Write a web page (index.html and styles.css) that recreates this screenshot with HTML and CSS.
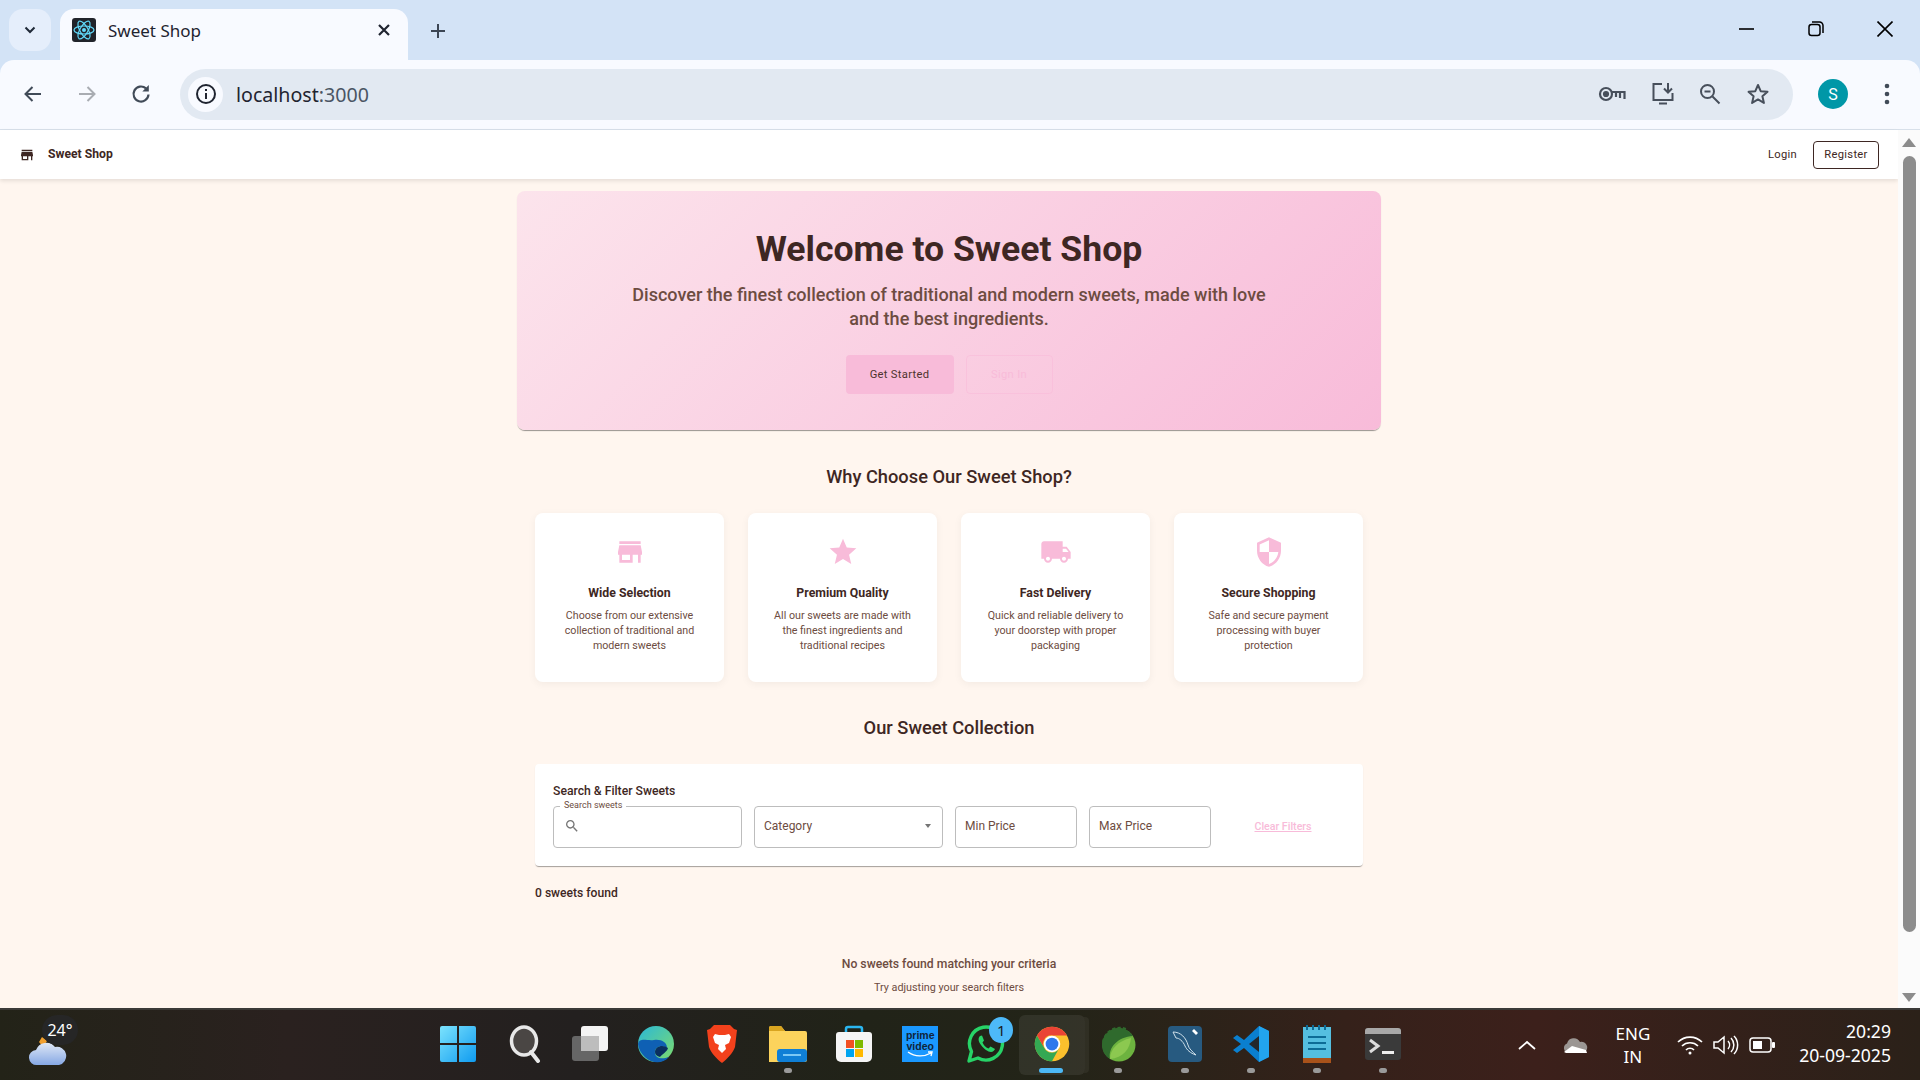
FILE: index.html
```html
<!DOCTYPE html>
<html lang="en">
<head>
    <meta charset="UTF-8">
    <title>Sweet Shop</title>
    <link rel="stylesheet" href="styles.css">
</head>
<body>
    <div class="tabstrip">
        <button class="tab-list"><svg width="14" height="14" viewBox="0 0 14 14"><path d="M2.5 4.5 7 9l4.5-4.5" fill="none" stroke="#1f2937" stroke-width="2"/></svg></button>
        <div class="tab">
            <svg class="favicon" width="24" height="24" viewBox="0 0 24 24">
                <rect width="24" height="24" rx="3" fill="#20232a"/>
                <g fill="none" stroke="#61dafb" stroke-width="1.2">
                    <ellipse cx="12" cy="12" rx="10" ry="4"/>
                    <ellipse cx="12" cy="12" rx="10" ry="4" transform="rotate(60 12 12)"/>
                    <ellipse cx="12" cy="12" rx="10" ry="4" transform="rotate(120 12 12)"/>
                </g>
                <circle cx="12" cy="12" r="2" fill="#61dafb"/>
            </svg>
            <span class="tab-title">Sweet Shop</span>
            <svg width="14" height="14" viewBox="0 0 14 14"><path d="M2 2l10 10M12 2 2 12" stroke="#1f2430" stroke-width="2.2"/></svg>
        </div>
        <svg class="new-tab" width="16" height="16" viewBox="0 0 16 16"><path d="M8 1v14M1 8h14" stroke="#3c4654" stroke-width="2"/></svg>
        <div class="window-controls">
            <svg width="16" height="16" viewBox="0 0 16 16"><path d="M0 8h15" stroke="#000" stroke-width="1.6"/></svg>
            <svg width="16" height="16" viewBox="0 0 16 16" fill="none" stroke="#000" stroke-width="1.5"><rect x="1" y="3.5" width="11" height="11" rx="2.5"/><path d="M4 1h7.5A3.5 3.5 0 0 1 15 4.500V12"/></svg>
            <svg width="16" height="16" viewBox="0 0 16 16"><path d="M.5.5l15 15M15.500.5l-15 15" stroke="#000" stroke-width="1.6"/></svg>
        </div>
    </div>

    <div class="toolbar">
        <svg class="tool" width="24" height="24" viewBox="0 0 24 24"><path d="M20 12H5M11.500 5 4.500 12l7 7" fill="none" stroke="#414b58" stroke-width="2"/></svg>
        <svg class="tool" width="24" height="24" viewBox="0 0 24 24"><path d="M4 12h15M12.500 5l7 7-7 7" fill="none" stroke="#a9acb2" stroke-width="2"/></svg>
        <svg class="tool" width="24" height="24" viewBox="0 0 24 24"><path d="M19.500 12.500A7.500 7.500 0 1 1 17 6.400" fill="none" stroke="#414b58" stroke-width="2.200"/><path d="M19.800 3v6.500h-6.500z" fill="#414b58"/></svg>
        <div class="omnibox">
            <span class="site-info"><svg width="22" height="22" viewBox="0 0 22 22"><circle cx="11" cy="11" r="9" fill="none" stroke="#1f2430" stroke-width="2"/><path d="M11 10v6M11 6v2" stroke="#1f2430" stroke-width="2"/></svg></span>
            <span class="url">localhost<span class="url-port">:3000</span></span>
            <div class="omni-icons">
                <svg width="28" height="16" viewBox="0 0 28 16" fill="none" stroke="#474f5b" stroke-width="2.200"><circle cx="8" cy="8" r="6"/><circle cx="8" cy="8" r="2" fill="#474f5b"/><path d="M14 6h12.500v7M22 7v5M18 7v4"/></svg>
                <svg width="24" height="24" viewBox="0 0 24 24" fill="none" stroke="#474f5b" stroke-width="2"><path d="M11 2H2.500v16h19v-7M8 21.500h8M17 1v9M13 6.500l4 4 4-4"/></svg>
                <svg width="22" height="22" viewBox="0 0 22 22" fill="none" stroke="#474f5b" stroke-width="2"><circle cx="8.500" cy="8.500" r="6.500"/><path d="M13.500 13.500l7 7M5.500 8.500h6"/></svg>
                <svg width="24" height="24" viewBox="0 0 24 24"><path d="M12 3l2.700 6.200 6.800.6-5.100 4.500 1.500 6.600L12 17.400l-5.900 3.500 1.500-6.600-5.100-4.500 6.800-.6z" fill="none" stroke="#474f5b" stroke-width="2" stroke-linejoin="round"/></svg>
            </div>
        </div>
        <span class="avatar">S</span>
        <svg class="kebab" width="6" height="22" viewBox="0 0 6 22" fill="#414b58"><circle cx="3" cy="3" r="2.300"/><circle cx="3" cy="11" r="2.300"/><circle cx="3" cy="19" r="2.300"/></svg>
    </div>

    <div class="viewport">
        <div class="page">
            <nav class="navbar">
                <svg width="16" height="16" viewBox="0 0 24 24" fill="#3e2723"><path d="M20 4H4v2h16V4zm1 10v-2l-1-5H4l-1 5v2h1v6h10v-6h4v6h2v-6h1zm-9 4H6v-4h6v4z"/></svg>
                <span class="brand">Sweet Shop</span>
                <a class="nav-login">Login</a>
                <a class="nav-register">Register</a>
            </nav>

            <main class="content">
                <section class="hero">
                    <h1>Welcome to Sweet Shop</h1>
                    <p>Discover the finest collection of traditional and modern sweets, made with love and the best ingredients.</p>
                    <div class="hero-actions">
                        <a class="btn-primary">Get Started</a>
                        <a class="btn-ghost">Sign In</a>
                    </div>
                </section>

                <h2 class="why-title">Why Choose Our Sweet Shop?</h2>
                <div class="features">
                    <div class="feature">
                        <svg viewBox="0 0 24 24"><path d="M20 4H4v2h16V4zm1 10v-2l-1-5H4l-1 5v2h1v6h10v-6h4v6h2v-6h1zm-9 4H6v-4h6v4z"/></svg>
                        <h3>Wide Selection</h3>
                        <p>Choose from our extensive collection of traditional and modern sweets</p>
                    </div>
                    <div class="feature">
                        <svg viewBox="0 0 24 24"><path d="M12 17.270 18.180 21l-1.640-7.030L22 9.240l-7.190-.61L12 2 9.190 8.630 2 9.240l5.460 4.730L5.820 21z"/></svg>
                        <h3>Premium Quality</h3>
                        <p>All our sweets are made with the finest ingredients and traditional recipes</p>
                    </div>
                    <div class="feature">
                        <svg viewBox="0 0 24 24"><path d="M20 8h-3V4H3c-1.100 0-2 .9-2 2v11h2c0 1.660 1.340 3 3 3s3-1.340 3-3h6c0 1.660 1.340 3 3 3s3-1.340 3-3h2v-5l-3-4zM6 18.500c-.83 0-1.500-.67-1.500-1.500s.67-1.500 1.500-1.500 1.500.67 1.500 1.500-.67 1.500-1.500 1.500zm13.500-9 1.960 2.500H17V9.500h2.500zm-1.500 9c-.83 0-1.500-.67-1.500-1.500s.67-1.500 1.500-1.500 1.500.67 1.500 1.500-.67 1.500-1.500 1.500z"/></svg>
                        <h3>Fast Delivery</h3>
                        <p>Quick and reliable delivery to your doorstep with proper packaging</p>
                    </div>
                    <div class="feature">
                        <svg viewBox="0 0 24 24"><path d="M12 1 3 5v6c0 5.550 3.840 10.740 9 12 5.160-1.260 9-6.450 9-12V5l-9-4zm0 10.990h7c-.53 4.120-3.280 7.790-7 8.940V12H5V6.300l7-3.110v8.800z"/></svg>
                        <h3>Secure Shopping</h3>
                        <p>Safe and secure payment processing with buyer protection</p>
                    </div>
                </div>

                <h2 class="collection-title">Our Sweet Collection</h2>
                <div class="filters">
                    <h4>Search &amp; Filter Sweets</h4>
                    <div class="filter-row">
                        <div class="field field-wide field-search">
                            <span class="field-label">Search sweets</span>
                            <svg width="16" height="16" viewBox="0 0 24 24" fill="#757575"><path d="M15.500 14h-.79l-.28-.27C15.410 12.590 16 11.110 16 9.500 16 5.910 13.090 3 9.500 3S3 5.910 3 9.500 5.910 16 9.500 16c1.610 0 3.090-.59 4.230-1.570l.27.28v.79l5 4.990L20.490 19l-4.990-5zm-6 0C7.010 14 5 11.990 5 9.500S7.010 5 9.500 5 14 7.010 14 9.500 11.990 14 9.500 14z"/></svg>
                        </div>
                        <div class="field field-wide field-select">Category<span class="caret"></span></div>
                        <div class="field field-price">Min Price</div>
                        <div class="field field-price">Max Price</div>
                        <a class="clear-filters">Clear Filters</a>
                    </div>
                </div>
                <p class="result-count">0 sweets found</p>
                <p class="empty-title">No sweets found matching your criteria</p>
                <p class="empty-hint">Try adjusting your search filters</p>
            </main>
        </div>
        <div class="scrollbar">
            <span class="arrow-up"></span>
            <span class="thumb"></span>
            <span class="arrow-down"></span>
        </div>
    </div>

    <footer class="taskbar">
        <div class="weather">
            <svg width="38" height="36" viewBox="0 0 38 36">
                <path d="M10 12l3-5 5 4-4 6z" fill="#f0a030"/>
                <defs><linearGradient id="cloud" x1="0" y1="0" x2="0" y2="1"><stop offset="0" stop-color="#dfe8f6"/><stop offset="1" stop-color="#86a8e4"/></linearGradient></defs>
                <path d="M8 35a7.500 7.500 0 0 1-1-15 11 11 0 0 1 19-3 9 9 0 0 1 4 18z" fill="url(#cloud)"/>
            </svg>
            <span class="temp">24°</span>
        </div>
        <div class="apps">
            <span class="app">
                <svg width="36" height="36" viewBox="0 0 36 36"><defs><linearGradient id="win" x1="0" y1="0" x2="1" y2="1"><stop offset="0" stop-color="#7ce3fd"/><stop offset="1" stop-color="#0f9bf0"/></linearGradient></defs><path d="M2 0h15v17H0V2a2 2 0 0 1 2-2zM19 0h15a2 2 0 0 1 2 2v15H19zM0 19h17v17H2a2 2 0 0 1-2-2zM19 19h17v15a2 2 0 0 1-2 2H19z" fill="url(#win)"/></svg>
            </span>
            <span class="app">
                <svg width="34" height="38" viewBox="-2 0 34 38"><ellipse cx="15" cy="16" rx="12.500" ry="14" fill="#4a4644" stroke="#e8e8e8" stroke-width="3.500"/><path d="M22 27l7 9" stroke="#e8e8e8" stroke-width="4" stroke-linecap="round"/></svg>
            </span>
            <span class="app">
                <svg width="36" height="36" viewBox="0 0 36 36"><rect x="0" y="10" width="27" height="25" rx="3" fill="#666"/><rect x="9" y="0" width="27" height="25" rx="3" fill="#f4f4f4"/><path d="M9 10h18v15H9z" fill="#bdbdbd"/></svg>
            </span>
            <span class="app">
                <svg width="36" height="38" viewBox="0 0 36 38"><defs><linearGradient id="edge" x1="0" y1="0" x2="1" y2="1"><stop offset="0" stop-color="#2ab8d8"/><stop offset="1" stop-color="#7fdc6a"/></linearGradient></defs><circle cx="18" cy="19" r="18" fill="url(#edge)"/><path d="M0 19C2 34 20 44 31 32c-8 3-15 1-14-6 .7-5 8-6 12-3 0-6-6-9-13-8C8 16 2 12 0 19z" fill="#0f60b4"/><path d="M17 27c0-6 8-8 13-4-1 4-6 6-8 9-3-1-5-2-5-5z" fill="#0a2f5f"/></svg>
            </span>
            <span class="app">
                <svg width="30" height="38" viewBox="0 0 30 38"><path d="M7 0h16l4 4 3 1-2 17c-2 6-8 12-13 16C10 34 4 28 2 22L0 5l3-1z" fill="#f3411c"/><path d="M8 9l4 1h6l4-1 2 3-2 6-4 2 1 4-4 4-4-4 1-4-4-2-2-6z" fill="#fff"/></svg>
            </span>
            <span class="app has-dot">
                <svg width="38" height="36" viewBox="0 0 38 36"><path d="M0 2a2 2 0 0 1 2-2h10l4 5h20a2 2 0 0 1 2 2v27a2 2 0 0 1-2 2H0z" fill="#fcd35c"/><path d="M0 2a2 2 0 0 1 2-2h10l4 5H0z" fill="#d9a520"/><rect x="8" y="23" width="30" height="13" rx="3" fill="#0f7fd6"/><path d="M14 29h18" stroke="#7cc8f5" stroke-width="2"/></svg>
            </span>
            <span class="app">
                <svg width="36" height="38" viewBox="0 0 36 38"><path d="M10 8V4a2 2 0 0 1 2-2h12a2 2 0 0 1 2 2v4" fill="none" stroke="#2ab6f0" stroke-width="2.500"/><path d="M3 7h30a3 3 0 0 1 3 3v22a5 5 0 0 1-5 5H5a5 5 0 0 1-5-5V10a3 3 0 0 1 3-3z" fill="#f5f5f5"/><rect x="10" y="15" width="8" height="8" fill="#f25022"/><rect x="19" y="15" width="8" height="8" fill="#7fba00"/><rect x="10" y="24" width="8" height="8" fill="#00a4ef"/><rect x="19" y="24" width="8" height="8" fill="#ffb900"/></svg>
            </span>
            <span class="app"><span class="prime"><span>prime</span><span>video</span><svg width="26" height="7" viewBox="0 0 26 7"><path d="M1 1c7 5 16 5 23 1M21 1l4 0-1 4" fill="none" stroke="#fff" stroke-width="1.400"/></svg></span></span>
            <span class="app">
                <span class="whatsapp">
                    <svg width="38" height="38" viewBox="0 0 38 38"><path d="M2 36l2.500-9.500A16.500 16.500 0 1 1 11 33z" fill="none" stroke="#27d367" stroke-width="3.400" stroke-linejoin="round"/><path d="M13 11c-2 2-2 5 1 9s7 7 10 7c2 0 3.500-1.500 4-3l-4.500-2.500-2 2c-3-1-5-3.500-6-6l1.500-2L15 10.500z" fill="#27d367"/></svg>
                    <span class="badge">1</span>
                </span>
            </span>
            <span class="app app-active">
                <svg width="36" height="36" viewBox="0 0 48 48"><circle cx="24" cy="24" r="23" fill="#fbc02d"/><path d="M4.100 12.500 14 29.500A11 11 0 0 0 33.500 29.500L24 47A23 23 0 0 1 4.100 12.500z" fill="#34a853"/><path d="M4.100 12.500A23 23 0 0 1 43.900 12.500H24A11 11 0 0 0 14 29.500z" fill="#ea4335"/><circle cx="24" cy="24" r="11" fill="#fff"/><circle cx="24" cy="24" r="8.500" fill="#2f78ec"/></svg>
            </span>
            <span class="app has-dot">
                <svg width="36" height="38" viewBox="0 0 36 38"><circle cx="19" cy="20" r="16.500" fill="#6db33f"/><path d="M4 17a16 16 0 0 1 22-12" fill="none" stroke="#2f6a2d" stroke-width="4" stroke-dasharray="3 2"/><path d="M19 3a17 17 0 0 0-17 17c0 6 3 11 8 14C8 22 18 12 33 11c-3-5-8-8-14-8z" fill="#2f6a2d"/><path d="M10 34c0-10 8-18 21-21-1 11-8 20-21 21z" fill="#8cc850"/></svg>
            </span>
            <span class="app has-dot">
                <svg width="34" height="36" viewBox="0 0 34 36"><rect width="34" height="36" rx="4" fill="#275a80"/><path d="M5 6c8 0 13 6 15 13 1 4 4 6 8 10-6-2-9-5-11-9C15 15 11 12 8 12z" fill="none" stroke="#cfe0ea" stroke-width="1"/><path d="M26 3l4 4-2 2-4-4z" fill="#fff"/></svg>
            </span>
            <span class="app has-dot">
                <svg width="36" height="36" viewBox="0 0 36 36"><path d="M26 0l10 5v26l-10 5-15-14-7 5-4-3 8-6-8-6 4-3 7 5z" fill="#0a7fcf"/><path d="M26 0l10 5v26l-10 5z" fill="#22a4ee"/><path d="M26 10v16l-10-8z" fill="#23272b"/></svg>
            </span>
            <span class="app has-dot">
                <svg width="30" height="38" viewBox="0 0 30 38"><rect x="1" y="2" width="28" height="31" fill="#55bfe0"/><rect x="1" y="33" width="28" height="5" fill="#a9521a"/><path d="M6 12h18M6 18h18M6 24h18" stroke="#0d6c96" stroke-width="2"/><path d="M5 0v5M11 0v5M17 0v5M23 0v5" stroke="#0d6c96" stroke-width="2"/></svg>
            </span>
            <span class="app has-dot">
                <svg width="36" height="32" viewBox="0 0 36 32"><rect width="36" height="32" rx="3" fill="#3a3a3a"/><path d="M0 3a3 3 0 0 1 3-3h30a3 3 0 0 1 3 3v3H0z" fill="#a8a8a8"/><path d="M5 12l8 6-8 6" fill="none" stroke="#ddd" stroke-width="3"/><rect x="17" y="23" width="12" height="3" fill="#eee"/></svg>
            </span>
        </div>
        <div class="tray">
            <svg class="tray-chevron" width="18" height="10" viewBox="0 0 18 10"><path d="M1 9l8-7 8 7" fill="none" stroke="#fff" stroke-width="1.800"/></svg>
            <svg class="tray-cloud" width="26" height="16" viewBox="0 0 26 16"><path d="M6 16a5 5 0 0 1-1-9.500A7 7 0 0 1 18 5a5.500 5.500 0 0 1 3 11z" fill="#9b9693"/><path d="M2 15l8-6 14 4 1 3H4z" fill="#fff"/></svg>
            <span class="lang">ENG<br>IN</span>
            <svg width="26" height="20" viewBox="0 0 26 20" fill="none" stroke="#fff" stroke-width="1.700"><path d="M1 7a17 17 0 0 1 24 0M5 11a11.500 11.500 0 0 1 16 0M9 15a5.500 5.500 0 0 1 8 0"/><circle cx="13" cy="18" r="1.500" fill="#fff" stroke="none"/></svg>
            <svg width="26" height="20" viewBox="0 0 26 20" fill="none" stroke="#fff" stroke-width="1.500"><path d="M1 7v6h4l6 5V2L5 7zM15 6a6 6 0 0 1 0 8M18 3a10 10 0 0 1 0 14M21 1a13 13 0 0 1 0 18"/></svg>
            <svg width="26" height="16" viewBox="0 0 26 16"><rect x="1" y="1" width="21" height="14" rx="3" fill="none" stroke="#fff" stroke-width="1.500"/><rect x="4" y="4" width="9" height="8" fill="#fff"/><rect x="23" y="5" width="3" height="6" rx="1" fill="#fff"/></svg>
            <span class="clock">20:29<br>20-09-2025</span>
        </div>
    </footer>
</body>
</html>
```

FILE: styles.css
```css
* { margin: 0; padding: 0; box-sizing: border-box; }
body { width: 1920px; height: 1080px; overflow: hidden; display: flex; flex-direction: column; font-family: Roboto, sans-serif; background-color: #d3e3f6; }

/* browser chrome */
.tabstrip { height: 60px; flex: none; display: flex; align-items: flex-end; padding-left: 9px; }
.tab-list { width: 42px; height: 42px; margin-bottom: 9px; border: none; border-radius: 14px; background-color: #e5eefb; display: flex; align-items: center; justify-content: center; }
.tab { width: 348px; height: 51px; margin-left: 9px; padding: 0 17px 9px 12px; background-color: #f8faff; border-radius: 14px 14px 0 0; display: flex; align-items: center; }
.tab-title { flex: 1; margin-left: 12px; font-family: "Noto Sans", sans-serif; font-size: 17px; color: #1f2430; }
.new-tab { margin: 0 0 21px 22px; }
.window-controls { margin-left: auto; height: 100%; display: flex; align-items: center; gap: 53px; padding: 0 27px 2px 0; }

.toolbar { height: 70px; flex: none; display: flex; align-items: center; padding: 0 0 1px 21px; background-color: #f8faff; border-radius: 14px 14px 0 0; border-bottom: 1px solid #d8e0ea; }
.tool { margin-right: 30px; }
.omnibox { width: 1613px; height: 51px; margin-left: -3px; padding: 0 23px 0 8px; border-radius: 26px; background-color: #e2e9f2; display: flex; align-items: center; }
.site-info { width: 35px; height: 35px; border-radius: 50%; background-color: #f8faff; display: flex; align-items: center; justify-content: center; }
.url { margin-left: 13px; font-family: "Noto Sans", sans-serif; font-size: 19.6px; color: #1f2430; }
.url-port { color: #4a5564; }
.omni-icons { margin-left: auto; width: 172px; display: flex; align-items: center; justify-content: space-between; }
.avatar { width: 30px; height: 30px; margin-left: 25px; border-radius: 50%; background-color: #0097a7; color: #fff; font-size: 16px; display: flex; align-items: center; justify-content: center; }
.kebab { margin-left: 36px; }

/* page */
.viewport { height: 878px; flex: none; display: flex; background-color: #fff6ef; }
.page { width: 1898px; display: flex; flex-direction: column; }
.navbar { height: 49px; flex: none; padding: 0 19px 0 19px; background-color: #fff; display: flex; align-items: center; box-shadow: 0 2px 4px rgba(0, 0, 0, 0.1); color: #3e2723; }
.brand { margin: 0 0 2px 13px; font-size: 12.2px; font-weight: 700; }
.nav-login { margin-left: auto; font-size: 11.2px; letter-spacing: 0.3px; }
.nav-register { margin-left: 16px; width: 66px; height: 28px; border: 1px solid #3e2723; border-radius: 4px; font-size: 11.2px; letter-spacing: 0.3px; display: flex; align-items: center; justify-content: center; }

.content { display: flex; flex-direction: column; align-items: center; padding-top: 12px; color: #3e2723; }
.hero { width: 864px; height: 239px; padding-top: 35px; text-align: center; border-radius: 8px; background: linear-gradient(135deg, #fce4ec, #f8bbd9); box-shadow: 0 2px 1px -1px rgba(0, 0, 0, 0.3), 0 1px 1px rgba(0, 0, 0, 0.14); }
.hero h1 { font-size: 35.6px; line-height: 46px; font-weight: 700; }
.hero p { width: 640px; margin: 11px auto 0; font-size: 18.05px; line-height: 24px; font-weight: 500; color: #6d4c41; }
.hero-actions { margin-top: 24px; display: flex; justify-content: center; gap: 12px; }
.btn-primary, .btn-ghost { height: 39px; display: flex; align-items: center; justify-content: center; font-size: 11.2px; letter-spacing: 0.3px; border-radius: 4px; }
.btn-primary { width: 108px; background-color: #f8bbd9; color: #4e342e; }
.btn-ghost { width: 87px; color: #f8bbd9; border: 1px solid rgba(248, 187, 217, 0.6); }

.why-title, .collection-title { font-size: 18.3px; line-height: 24px; font-weight: 500; }
.why-title { margin-top: 35px; }
.features { margin-top: 24px; width: 828px; display: flex; gap: 24px; }
.feature { flex: 1; height: 169px; padding-top: 23px; text-align: center; background-color: #fff; border-radius: 8px; box-shadow: 0 2px 8px rgba(0, 0, 0, 0.05); }
.feature svg { width: 32px; height: 32px; fill: #f8bbd9; display: block; margin: 0 auto; }
.feature h3 { margin-top: 16px; font-size: 12.3px; line-height: 18px; font-weight: 700; }
.feature p { width: 146px; margin: 6px auto 0; font-size: 10.7px; line-height: 15px; color: #6d4c41; }
.collection-title { margin-top: 34px; }

.filters { margin-top: 24px; width: 828px; height: 102px; padding: 19px 18px 0; background-color: #fff; border-radius: 4px; box-shadow: 0 2px 1px -1px rgba(0, 0, 0, 0.25), 0 1px 1px rgba(0, 0, 0, 0.14); }
.filters h4 { font-size: 12.2px; line-height: 16px; font-weight: 500; }
.filter-row { margin-top: 7px; display: flex; gap: 12px; align-items: center; }
.field { position: relative; flex: none; height: 42px; padding: 0 9px 2px; border: 1px solid #bdbdbd; border-radius: 4px; display: flex; align-items: center; font-size: 12px; color: #6d4c41; }
.field-wide { width: 189px; }
.field-price { width: 122px; }
.field-search svg { margin-left: 1px; }
.field-label { position: absolute; top: -7px; left: 6px; padding: 0 4px; background-color: #fff; font-size: 9px; line-height: 11px; color: #6d4c41; }
.caret { margin: 0 2px 0 auto; border: 3.5px solid transparent; border-top: 4px solid #757575; border-bottom: none; }
.clear-filters { flex: none; width: 120px; padding-bottom: 1px; text-align: center; font-size: 10.6px; font-weight: 500; color: #f8bbd9; text-decoration: underline; }
.result-count { align-self: flex-start; margin: 19px 0 0 535px; font-size: 12.1px; line-height: 16px; font-weight: 500; }
.empty-title { margin-top: 54px; font-size: 12.2px; line-height: 18px; font-weight: 500; color: #6d4c41; }
.empty-hint { margin-top: 7px; font-size: 10.8px; line-height: 16px; color: #6d4c41; }

.scrollbar { width: 22px; padding: 8px 4px 2px 4px; background-color: #fbfbfb; display: flex; flex-direction: column; align-items: center; }
.arrow-up { border: 7px solid transparent; border-bottom: 9px solid #8c8c8c; border-top: none; }
.thumb { width: 13px; height: 776px; margin-top: 9px; border-radius: 7px; background-color: #8c8c8c; }
.arrow-down { margin-top: auto; margin-bottom: 4px; border: 7px solid transparent; border-top: 9px solid #8c8c8c; border-bottom: none; }

/* taskbar */
.taskbar { height: 72px; flex: none; display: flex; align-items: center; border-top: 2px solid #3b3a38; color: #fff; font-family: "Noto Sans", sans-serif; background: linear-gradient(90deg, #232318 0%, #2a211f 15%, #23201f 30%, #212318 45%, #232418 55%, #35211a 70%, #3c201b 80%, #2b2119 100%); }
.weather { position: relative; width: 424.5px; padding: 6px 0 0 29px; display: flex; align-self: center; }
.temp { position: absolute; top: -9px; left: 42px; width: 36px; height: 30px; border-radius: 15px; background-color: #262626; font-size: 16px; display: flex; align-items: center; justify-content: center; }
.apps { display: flex; }
.app { position: relative; width: 66.1px; height: 60px; display: flex; align-items: center; justify-content: center; padding-bottom: 2px; }
.has-dot::after { content: ""; position: absolute; bottom: 2px; left: 29px; width: 8px; height: 5px; border-radius: 3px; background-color: #9a9a9a; }
.app-active { background-color: rgba(255, 255, 255, 0.07); border-radius: 6px; box-shadow: 6px 0 0 -2px rgba(255, 255, 255, 0.05); }
.app-active::after { content: ""; position: absolute; bottom: 2px; left: 20px; width: 24px; height: 5px; border-radius: 3px; background-color: #4cb8f5; }
.prime { width: 36px; height: 36px; background-color: #1a98ff; color: #10243a; font-size: 10.5px; line-height: 10.5px; font-weight: 700; display: flex; flex-direction: column; align-items: center; padding-top: 4px; font-family: "Liberation Sans", sans-serif; }
.prime svg { width: 26px; height: 7px; }
.whatsapp { position: relative; display: flex; }
.badge { position: absolute; top: -8px; right: -8px; width: 24px; height: 26px; border-radius: 50%; background-color: #4db9f9; color: #1a1a1a; font-size: 15px; display: flex; align-items: center; justify-content: center; }
.tray { flex: 1; display: flex; align-items: center; padding: 0 29px 0 0; }
.tray-chevron { margin-left: 102px; }
.tray svg.tray-cloud { margin-left: 26px; }
.lang { width: 60px; margin: 0 14px 0 15px; text-align: center; font-size: 17px; line-height: 23px; }
.tray svg + svg { margin-left: 10px; }
.clock { margin-left: auto; padding-bottom: 5px; text-align: right; font-size: 17.6px; line-height: 24px; }
```
